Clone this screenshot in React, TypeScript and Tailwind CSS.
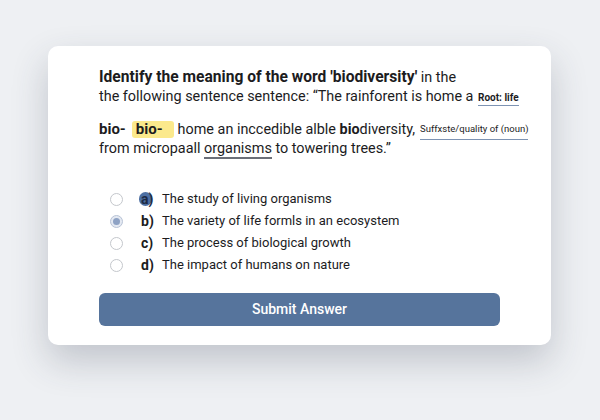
const options = [
  { key: 'a', text: 'The study of living organisms' },
  { key: 'b', text: 'The variety of life formls in an ecosystem' },
  { key: 'c', text: 'The process of biological growth' },
  { key: 'd', text: 'The impact of humans on nature' },
];

const App = () => {
  return (
    <div className="h-[420px] w-[600px] bg-[#eef0f3] pt-[46px] pl-[48px] font-['Roboto',sans-serif] text-[#1c1c1e]">
      <div className="w-[503px] h-[299px] bg-white rounded-[10px] shadow-[0_16px_36px_rgba(50,60,80,0.24)] pt-[22px] px-[51px]">
        {/* question */}
        <div className="text-[14.4px] leading-[19px] whitespace-nowrap">
          <div>
            <span className="font-bold text-[15.6px]">Identify the meaning of the word 'biodiversity'</span> in the
          </div>
          <div>
            the following sentence sentence: “The rainforent is home a{' '}
            <span className="ml-[1px] text-[10px] font-bold border-b border-[#7d93b3] pb-[2px]">Root: life</span>
          </div>
          <div className="mt-[13px] h-[19px] flex items-center">
            <span className="font-bold text-[15px]">bio-</span>
            <span className="ml-[6px] mr-[4px] h-[17px] leading-[17px] bg-[#fbe98c] rounded-[3px] pl-[4px] pr-[11px] font-bold text-[15px]">bio-</span>
            <span>home an inccedible alble <span className="font-bold">bio</span>diversity,</span>
            <span className="ml-[5px] text-[9.5px] border-b border-[#7d93b3] pb-[1px]">Suffxste/quality of (noun)</span>
          </div>
          <div>
            from micropaall <span className="border-b-2 border-[#6b6f78]">organisms</span> to towering trees.”
          </div>
        </div>

        {/* options */}
        <div className="mt-[30px] text-[13px]">
          {options.map((o) => (
            <div key={o.key} className="h-[22px] flex items-center">
              <div className="w-[34px] pl-[11px]">
                {o.key === 'b' ? (
                  <div className="w-[13px] h-[13px] rounded-full border border-[#b8c3d6] bg-[#e4e9f2] flex items-center justify-center">
                    <div className="w-[7px] h-[7px] rounded-full bg-[#8ea2c4]" />
                  </div>
                ) : (
                  <div className="w-[13px] h-[13px] rounded-full border border-[#c4c7cc] bg-white" />
                )}
              </div>
              <div className="w-[29px] pl-[8px] font-bold text-[14px]">
                {o.key === 'a' ? (
                  <span className="relative">
                    <span className="absolute left-[-2px] top-[1px] w-[13px] h-[14px] rounded-full bg-[#4d6fa3]" />
                    <span className="relative text-[#1d2a44]">a)</span>
                  </span>
                ) : (
                  <span>{o.key})</span>
                )}
              </div>
              <span>{o.text}</span>
            </div>
          ))}
        </div>

        <button className="mt-[17px] w-[401px] h-[33px] rounded-[6px] bg-[#56749c] text-white text-[14px] font-medium">
          Submit Answer
        </button>
      </div>
    </div>
  );
};

export default App;
